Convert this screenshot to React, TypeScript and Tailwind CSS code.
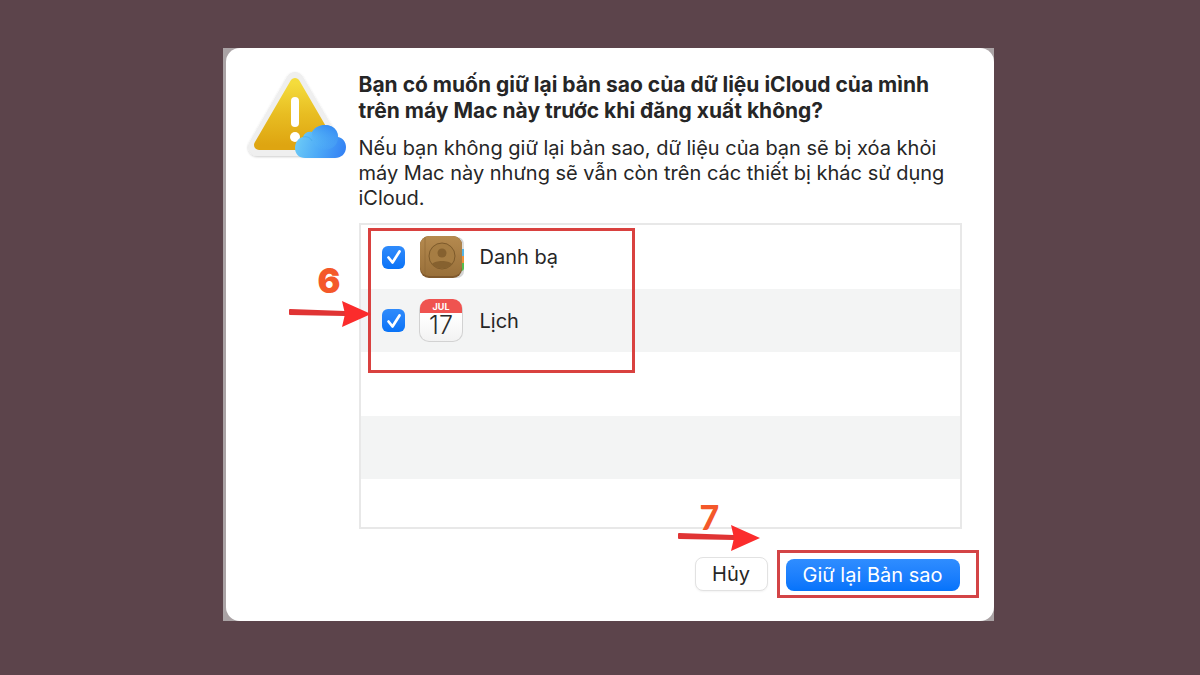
import { useState } from "react";
import type { ReactNode } from "react";

function WarningIcon() {
  return (
    <svg viewBox="0 0 104 92" className="h-[92px] w-[104px]" aria-hidden="true">
      <defs>
        <linearGradient id="warn" x1="0" y1="0" x2="0" y2="1">
          <stop offset="0" stopColor="#f4dc3c" />
          <stop offset="0.5" stopColor="#e8bd22" />
          <stop offset="1" stopColor="#dea511" />
        </linearGradient>
        <linearGradient id="cloud" x1="0" y1="0.4" x2="1" y2="0.6">
          <stop offset="0" stopColor="#6fcdf6" />
          <stop offset="0.5" stopColor="#4daaf7" />
          <stop offset="1" stopColor="#3583f4" />
        </linearGradient>
        <linearGradient id="puff" x1="0.7" y1="0" x2="0.3" y2="1">
          <stop offset="0" stopColor="#3489f3" />
          <stop offset="1" stopColor="#5fc2f6" stopOpacity="0" />
        </linearGradient>
        <filter id="soft" x="-20%" y="-20%" width="140%" height="140%">
          <feDropShadow dx="0" dy="1" stdDeviation="1" floodColor="#000" floodOpacity="0.2" />
        </filter>
      </defs>
      <path
        d="M49 11 L88 77 H11 Z"
        fill="#efefef"
        stroke="#efefef"
        strokeWidth="18"
        strokeLinejoin="round"
        filter="url(#soft)"
      />
      <path
        d="M49 13 L85 75 H13 Z"
        fill="url(#warn)"
        stroke="url(#warn)"
        strokeWidth="10"
        strokeLinejoin="round"
      />
      <rect x="45" y="27" width="8" height="30" rx="4" fill="#fff" />
      <circle cx="49" cy="67" r="5" fill="#fff" />
      <path
        d="M59 88 C53 88 49 84 49 78 C49 73 52 68 57 67 C58 63 62 61 66 62 C69 57 74 55 79 55 C87 55 92 60 92 67 C97 68 100 72 100 77 C100 84 95 88 89 88 Z"
        fill="url(#cloud)"
      />
      <path
        d="M66 62 C69 57 74 55 79 55 C87 55 92 60 92 67 C92 75 86 80 78 80 C71 80 66 74 66 62 Z"
        fill="url(#puff)"
      />
      <path d="M57 67 C61 66 65 68 66 71" fill="none" stroke="#389fe8" strokeWidth="1" opacity="0.5" />
    </svg>
  );
}

function ContactsIcon() {
  return (
    <svg viewBox="0 0 48 46" className="h-[46px] w-[48px]" aria-hidden="true">
      <defs>
        <linearGradient id="leather" x1="0" y1="0" x2="0" y2="1">
          <stop offset="0" stopColor="#b58a4f" />
          <stop offset="1" stopColor="#99703a" />
        </linearGradient>
      </defs>
      <rect x="6" y="3" width="40" height="41" rx="7" fill="#d5d5d5" />
      <rect x="36" y="9" width="10" height="6" fill="#dedede" />
      <rect x="36" y="15" width="10" height="7" fill="#55b4e4" />
      <rect x="36" y="22" width="10" height="7" fill="#f0913a" />
      <path d="M36 29 h10 v5 q0 3 -3 3 h-7 Z" fill="#55bd4e" />
      <rect x="2" y="2" width="42" height="42" rx="9" fill="#80592c" />
      <rect x="2" y="2" width="42" height="40" rx="9" fill="url(#leather)" />
      <path d="M7 3 V41" stroke="#8a6432" strokeWidth="1" opacity="0.6" />
      <circle cx="24" cy="22" r="13" fill="#a67d43" stroke="#7d5a2b" strokeWidth="1" />
      <circle cx="24" cy="19" r="4.5" fill="#86612f" />
      <path d="M14 30 C17 26 31 26 34 30 C30 36 18 36 14 30 Z" fill="#86612f" />
    </svg>
  );
}

function CalendarIcon() {
  return (
    <svg viewBox="0 0 48 46" className="h-[46px] w-[48px]" aria-hidden="true">
      <defs>
        <clipPath id="page">
          <rect x="2" y="1" width="42" height="42" rx="9" />
        </clipPath>
        <linearGradient id="paper" x1="0" y1="0" x2="0" y2="1">
          <stop offset="0.4" stopColor="#ffffff" />
          <stop offset="1" stopColor="#f2f2f2" />
        </linearGradient>
      </defs>
      <rect x="1" y="2" width="44" height="42" rx="10" fill="#d2d2d2" />
      <g clipPath="url(#page)">
        <rect x="2" y="1" width="42" height="42" fill="url(#paper)" />
        <rect x="2" y="1" width="42" height="14" fill="#ef5350" />
      </g>
      <text x="23" y="12" textAnchor="middle" fontSize="9" fontWeight="700" fill="#fff" fontFamily="Inter, sans-serif">
        JUL
      </text>
      <text x="23" y="36" textAnchor="middle" fontSize="25" fontWeight="300" fill="#2c2c2c" fontFamily="Inter, sans-serif">
        17
      </text>
    </svg>
  );
}

function Arrow() {
  return (
    <svg viewBox="0 0 84 28" className="h-[28px] w-[84px]" aria-hidden="true">
      <path d="M1 10 Q1 9 2 9 L57 11 V16 L2 15 Q1 15 1 14 Z" fill="#e03434" />
      <path d="M54 1 L83 14 L54 27 L57 14 Z" fill="#fb2c2c" />
    </svg>
  );
}

function Row({ label, icon }: { label: string; icon: ReactNode }) {
  const [checked, setChecked] = useState(true);
  return (
    <label className="flex h-full items-center pl-[21px]">
      <span className="grid size-6 place-items-center">
        <input
          type="checkbox"
          checked={checked}
          onChange={() => setChecked(!checked)}
          className="peer col-start-1 row-start-1 size-[23px] appearance-none rounded-[6px] border border-gray-300 bg-white checked:border-0 checked:bg-linear-to-b checked:from-[#2f8bfb] checked:to-[#0873f7]"
        />
        <svg
          viewBox="0 0 24 24"
          className="pointer-events-none col-start-1 row-start-1 hidden size-6 peer-checked:block"
          aria-hidden="true"
        >
          <path
            d="M6.5 12.5 L10.5 17.5 L17.5 6.5"
            fill="none"
            stroke="#fff"
            strokeWidth="2.7"
            strokeLinecap="round"
            strokeLinejoin="round"
          />
        </svg>
      </span>
      <span className="ml-3">{icon}</span>
      <span className="ml-3.5">{label}</span>
    </label>
  );
}

export default function App() {
  return (
    <main className="flex min-h-screen items-center justify-center bg-[#5c444b] pb-1.5 pl-4 font-['Inter','Liberation_Sans',sans-serif] text-[20px] text-[#262626]">
      <div className="w-full max-w-[771px] bg-[#aaa3a5] pl-[3px]">
        <section
          role="dialog"
          aria-labelledby="title"
          className="flex rounded-[14px] bg-white pt-6 pr-8 pb-[23px]"
        >
          <div className="-mt-0.5 w-[133px] shrink-0 pl-[20px]">
            <WarningIcon />
          </div>
          <div className="min-w-0 flex-1">
            <h1 id="title" className="text-[21px] leading-[26px] font-bold whitespace-nowrap">
              Bạn có muốn giữ lại bản sao của dữ liệu iCloud của mình
              <br />
              trên máy Mac này trước khi đăng xuất không?
            </h1>
            <p className="mt-3 leading-[25px] whitespace-nowrap">
              Nếu bạn không giữ lại bản sao, dữ liệu của bạn sẽ bị xóa khỏi
              <br />
              máy Mac này nhưng sẽ vẫn còn trên các thiết bị khác sử dụng
              <br />
              iCloud.
            </p>
            <div className="relative mt-3">
              <ul className="border-2 border-[#e8e8e8]">
                <li className="h-16">
                  <Row label="Danh bạ" icon={<ContactsIcon />} />
                </li>
                <li className="h-[63px] bg-[#f3f4f4]">
                  <Row label="Lịch" icon={<CalendarIcon />} />
                </li>
                <li className="h-16" />
                <li className="h-[63px] bg-[#f3f4f4]" />
                <li className="h-12" />
              </ul>
              <div className="pointer-events-none absolute top-[5px] left-[9px] h-[145px] w-[267px] border-3 border-[#d9413f]" />
              <div className="pointer-events-none absolute top-[77px] left-[-71px]">
                <Arrow />
              </div>
              <span className="absolute top-[38px] left-[-41px] text-[34px] leading-10 font-black text-[#f4582a]">
                6
              </span>
              <div className="pointer-events-none absolute top-[301px] left-[318px]">
                <Arrow />
              </div>
              <span className="absolute top-[274px] left-[341px] font-['Lato','Inter',sans-serif] text-[34px] leading-10 font-black text-[#f4582a]">
                7
              </span>
            </div>
            <div className="mt-[21px] -mr-[17px] flex items-center justify-end gap-[9px]">
              <button
                type="button"
                className="h-[34px] w-[73px] rounded-lg border border-[#e2e2e2] bg-white shadow-xs"
              >
                Hủy
              </button>
              <div className="border-3 border-[#d34446] pt-1.5 pr-4 pb-1 pl-1.5">
                <button
                  type="button"
                  className="block h-8 w-[174px] rounded-lg bg-linear-to-b from-[#2f8dff] to-[#0473fb] text-white"
                >
                  Giữ lại Bản sao
                </button>
              </div>
            </div>
          </div>
        </section>
      </div>
    </main>
  );
}
